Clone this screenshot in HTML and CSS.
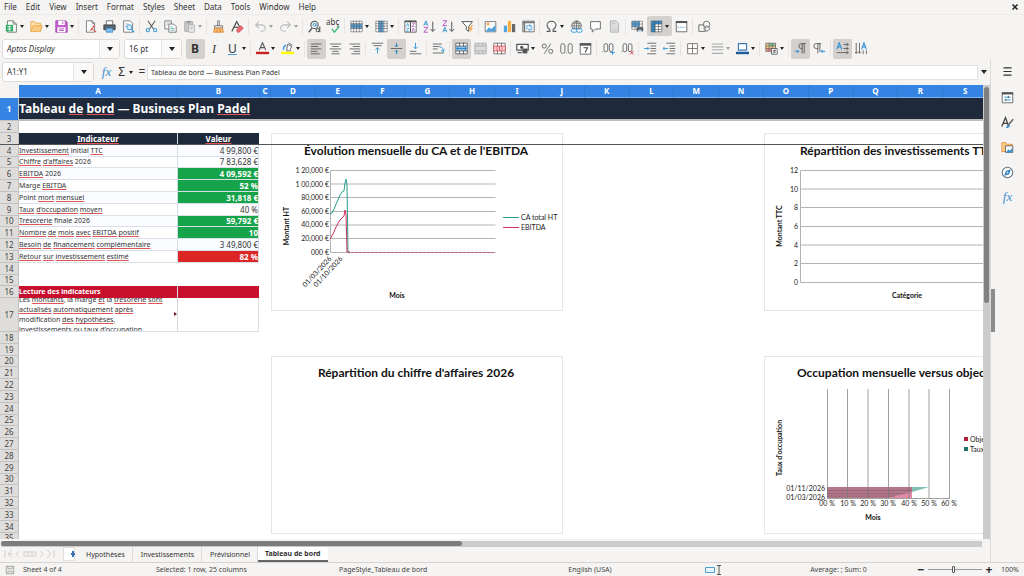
FILE: index.html
```html
<!DOCTYPE html>
<html lang="fr">
<head>
<meta charset="utf-8">
<title>Tableau de bord — Business Plan Padel</title>
<link rel="stylesheet" href="styles.css">
</head>
<body>
<nav class="menubar" aria-label="Menu">
  <button>File</button><button>Edit</button><button>View</button><button>Insert</button><button>Format</button><button>Styles</button><button>Sheet</button><button>Data</button><button>Tools</button><button>Window</button><button>Help</button>
  <button class="close" aria-label="Close"><svg viewBox="0 0 8 8"><path d="M1.5 1.5l5 5M6.500 1.500l-5 5" stroke="#222" stroke-width="1.500"/></svg></button>
</nav>

<div class="toolbar" role="toolbar" aria-label="Standard">
  <button class="tool split" aria-label="New"><svg viewBox="0 0 16 16"><path d="M3 1h7l4 4v10H3z" fill="#fff" stroke="#5a6a60"/><path d="M10 1v4h4" stroke="#5a6a60"/><path d="M1 6h9v8H1z" fill="#2fa866"/><path d="M3 8h5M3 10h5M3 12h5M5.500 7v6" stroke="#d8f5e4"/></svg></button>
  <button class="tool split" aria-label="Open"><svg viewBox="0 0 16 16"><path d="M1 14V2h5l1 2h6v3" fill="#fce0ae" stroke="#e8a33d"/><path d="M1 14L4 7h11l-2 7z" fill="#f9cc85" stroke="#e8a33d"/></svg></button>
  <button class="tool split" aria-label="Save"><svg viewBox="0 0 16 16"><path d="M1 1h12l2 2v12H1z" fill="#c45fd0" stroke="#9b3fa8"/><path d="M4 1h8v5H4zM3 9h10v6H3z" fill="#fff"/><path d="M5 11h6M5 13h6M9.500 2v3" stroke="#9b3fa8"/></svg></button>
  <span class="sep"></span>
  <button class="tool" aria-label="Export PDF"><svg viewBox="0 0 16 16"><path d="M3 1h7l3 3v11H3z" fill="#fff" stroke="#666"/><path d="M10 1v3h3" stroke="#666"/><path d="M13 6c-1 3-3 5-5 6 3-1 5 0 7 3M8 13c2-2 3-3 4-6" stroke="#e05555" stroke-width="1.300"/></svg></button>
  <button class="tool" aria-label="Print"><svg viewBox="0 0 16 16"><path d="M4 6V1h8v5" fill="#fff" stroke="#555"/><path d="M1 6h14v6H1z" fill="#55606a" stroke="#444"/><path d="M4 10h8v5H4z" fill="#7fc0f0" stroke="#3d85c0"/></svg></button>
  <button class="tool" aria-label="Print preview"><svg viewBox="0 0 16 16"><path d="M2 1h8l3 3v11H2z" fill="#fff" stroke="#666"/><path d="M4 5h4M4 8h2" stroke="#999"/><circle cx="9" cy="9" r="3.200" fill="#cfe9fb" stroke="#3e9bd8" stroke-width="1.200"/><path d="M11.500 11.500L15 15" stroke="#3e9bd8" stroke-width="1.600"/></svg></button>
  <span class="sep"></span>
  <button class="tool" aria-label="Cut"><svg viewBox="0 0 16 16"><path d="M3.500 1l7 10M12.500 1l-7 10" stroke="#555" stroke-width="1.300"/><circle cx="3.500" cy="12.500" r="2" stroke="#3e9bd8" stroke-width="1.300"/><circle cx="12.500" cy="12.500" r="2" stroke="#3e9bd8" stroke-width="1.300"/></svg></button>
  <button class="tool" aria-label="Copy"><svg viewBox="0 0 16 16"><path d="M1 1h8v10H1z" fill="#fff" stroke="#666"/><path d="M3 3.500h4M3 6h2" stroke="#999"/><path d="M6 5h6l3 3v7H6z" fill="#fff" stroke="#666"/><path d="M8 8.500h3M8 10.500h5M8 12.500h5" stroke="#5ab3a5"/></svg></button>
  <button class="tool split off" aria-label="Paste"><svg viewBox="0 0 16 16"><path d="M2 2h10v12H2z" fill="#c9c7c5" stroke="#aaa"/><path d="M5 1h4v3H5z" fill="#999"/><path d="M7 6h7v9H7z" fill="#eee" stroke="#aaa"/><path d="M9 9h3M9 11h3" stroke="#aaa"/></svg></button>
  <span class="sep"></span>
  <button class="tool" aria-label="Clone formatting"><svg viewBox="0 0 16 16"><path d="M7 1h2v6H7z" fill="#fff" stroke="#666"/><path d="M3 7h10v3H3z" fill="#eee" stroke="#666"/><path d="M3 10h10l1 5H2z" fill="#f4b46a" stroke="#d98c36"/><path d="M6 12v3M10 12v3" stroke="#d98c36"/></svg></button>
  <button class="tool" aria-label="Clear formatting"><svg viewBox="0 0 16 16"><path d="M1 14L7 2l5 9M4 9h5" stroke="#555" stroke-width="1.500"/><path d="M7 12l5-5 3 3-5 5H8z" fill="#ef6b73" stroke="#cf3f4a"/></svg></button>
  <span class="sep"></span>
  <button class="tool split off" aria-label="Undo"><svg viewBox="0 0 16 16"><path d="M6 2L2 6l4 4M2 6h7c4 0 5 3 5 4s-1 4-6 4" stroke="#bbb" stroke-width="1.300"/></svg></button>
  <button class="tool split off" aria-label="Redo"><svg viewBox="0 0 16 16"><path d="M10 2l4 4-4 4M14 6H7c-4 0-5 3-5 4s1 4 6 4" stroke="#bbb" stroke-width="1.300"/></svg></button>
  <span class="sep"></span>
  <button class="tool" aria-label="Find and replace"><svg viewBox="0 0 16 16"><circle cx="8" cy="6" r="4.500" stroke="#555" stroke-width="1.300"/><path d="M5 10l-4 5" stroke="#555" stroke-width="1.800"/><circle cx="8" cy="6" r="1.800" stroke="#3e9bd8" stroke-width="1.200"/><path d="M10 4v4" stroke="#3e9bd8"/><circle cx="12" cy="12.500" r="2" stroke="#444" stroke-width="1.200"/><path d="M14.500 8v7" stroke="#444" stroke-width="1.200"/></svg></button>
  <button class="tool" aria-label="Spelling"><span class="abc">abç</span><svg viewBox="0 0 16 16"><path d="M6 11l3 4 6-7" stroke="#3cb878" stroke-width="1.600"/></svg></button>
  <span class="sep"></span>
  <button class="tool split" aria-label="Row"><svg viewBox="0 0 16 16"><path d="M1 1h14v14H1z" fill="#fff"/><path d="M1 4.500h14v6H1z" fill="#4da3e0"/><path d="M1 1.500h14v13H1zM1 4.500h14M1 7.500h14M1 10.500h14M4.500 1v14M8 1v14M11.500 1v14" stroke="#666" stroke-width=".8"/></svg></button>
  <button class="tool split" aria-label="Column"><svg viewBox="0 0 16 16"><path d="M1 1h14v14H1z" fill="#fff"/><path d="M4.500 1h6v14h-6z" fill="#4da3e0"/><path d="M1 1.500h14v13H1zM1 4.500h14M1 7.500h14M1 10.500h14M4.500 1v14M7.500 1v14M11 1v14" stroke="#666" stroke-width=".8"/></svg></button>
  <span class="sep"></span>
  <button class="tool" aria-label="Sort"><svg viewBox="0 0 16 16"><path d="M1 1h14v14H1z" fill="#fff" stroke="#555"/><path d="M1 2h14M8 1v14" stroke="#555" stroke-width="1.400"/><path d="M3 8l1.500-4L6 8M3 10h3l-3 4h3" stroke="#3e9bd8"/><path d="M10 4h3l-3 4h3M10 14l1.500-4 1.500 4" stroke="#b153bd"/></svg></button>
  <button class="tool" aria-label="Sort ascending"><svg viewBox="0 0 16 16"><path d="M1 7l2.500-6L6 7M2 5h3" stroke="#3e9bd8" stroke-width="1.200"/><path d="M1 9h5l-5 6h5" stroke="#b153bd" stroke-width="1.200"/><path d="M12 2v12M9 11l3 3 3-3" stroke="#555" stroke-width="1.200"/></svg></button>
  <button class="tool" aria-label="Sort descending"><svg viewBox="0 0 16 16"><path d="M1 1h5L1 7h5" stroke="#b153bd" stroke-width="1.200"/><path d="M1 15l2.500-6L6 15M2 13h3" stroke="#3e9bd8" stroke-width="1.200"/><path d="M12 2v12M9 11l3 3 3-3" stroke="#555" stroke-width="1.200"/></svg></button>
  <button class="tool" aria-label="AutoFilter"><svg viewBox="0 0 16 16"><path d="M1 2h13L9.500 8v6l-3-2V8z" fill="#fff" stroke="#555" stroke-width="1.200"/><path d="M13 6l-4 6h3l-2 4 5-6h-3l3-4z" fill="#f5a742"/></svg></button>
  <span class="sep"></span>
  <button class="tool" aria-label="Image"><svg viewBox="0 0 16 16"><path d="M1.500 2h13v12.500h-13z" fill="#fff" stroke="#666"/><path d="M2 14l4-5 3 2 5-5v8z" fill="#4da3e0"/><circle cx="5" cy="5" r="1.800" fill="#f5a742"/></svg></button>
  <button class="tool" aria-label="Chart"><svg viewBox="0 0 16 16"><path d="M1 7h4v8H1z" fill="#4da3e0"/><path d="M6 1h4v14H6z" fill="#f4b042"/><path d="M11 5h4v10h-4z" fill="#666"/></svg></button>
  <button class="tool" aria-label="Pivot table"><svg viewBox="0 0 16 16"><path d="M1 1.500h14v13H1z" fill="#fff" stroke="#555"/><path d="M1 3h14M3 2v12" stroke="#777" stroke-width="2"/><path d="M6 12V7h5M9 5l2 2-2 2M12 7v5H8m2-2l-2 2 2 2" stroke="#3e9bd8"/></svg></button>
  <span class="sep"></span>
  <button class="tool split" aria-label="Special character"><svg viewBox="0 0 16 16"><path d="M2 14h4v-2C3 10 2.500 8 2.500 6.500 2.500 3.500 5 1.500 8 1.500s5.500 2 5.500 5c0 1.500-.5 3.500-3.500 5.500v2h4" stroke="#555" stroke-width="1.300"/></svg></button>
  <button class="tool" aria-label="Hyperlink"><svg viewBox="0 0 16 16"><circle cx="8" cy="7" r="5.800" stroke="#555"/><path d="M2 7h12M3 4h10M3 10h10M8 1v12M8 1c-4 4-4 8 0 12M8 1c4 4 4 8 0 12" stroke="#555" stroke-width=".8"/><rect x="1.500" y="11" width="7" height="4" rx="2" fill="#fff" stroke="#3e9bd8" stroke-width="1.200"/><rect x="8" y="11" width="7" height="4" rx="2" fill="#fff" stroke="#3e9bd8" stroke-width="1.200"/></svg></button>
  <button class="tool" aria-label="Comment"><svg viewBox="0 0 16 16"><path d="M2 2h12v9H8l-4 4v-4H2z" fill="#fff" stroke="#555"/></svg></button>
  <button class="tool off" aria-label="Headers and footers"><svg viewBox="0 0 16 16"><path d="M3 1h7l3 3v11H3z" fill="#ddd" stroke="#aaa"/><path d="M5 4h4M5 12h6" stroke="#bbb"/></svg></button>
  <span class="sep"></span>
  <button class="tool" aria-label="Print area"><svg viewBox="0 0 16 16"><path d="M1 1.500h13v10H1z" fill="#fff"/><path d="M1 1.500h10v7H1z" fill="#4da3e0"/><path d="M1 1.500h13v10H1zM1 5h13M1 8.500h13M5 1v10M9.500 1v10" stroke="#666" stroke-width=".8"/><path d="M7 9h8v5H7z" fill="#555"/><path d="M9 12h4v3H9z" fill="#bfe0f6"/></svg></button>
  <button class="tool split on" aria-label="Freeze rows and columns"><svg viewBox="0 0 16 16"><path d="M1.500 1h13v14h-13z" fill="#fff"/><path d="M1.500 1h13v4h-8v10h-5z" fill="#2b8fd6"/><path d="M1.500 1.500h13v13h-13zM2 5h12M2 8h12M2 11.500h12M6 1v14M10.500 1v14" stroke="#555" stroke-width=".8"/></svg></button>
  <button class="tool" aria-label="Split window"><svg viewBox="0 0 16 16"><path d="M1.500 2h13v12.500h-13z" fill="#fff" stroke="#555"/><path d="M1 2.500h14" stroke="#555" stroke-width="2.500"/><path d="M3 9h10" stroke="#4da3e0" stroke-dasharray="2 1"/></svg></button>
  <span class="sep"></span>
  <button class="tool" aria-label="Shapes"><svg viewBox="0 0 16 16"><path d="M1 6h8v8H1z" stroke="#555"/><circle cx="10.500" cy="5.500" r="4" fill="#fff" fill-opacity=".7" stroke="#555"/><path d="M11 7l4 3.500-4 3.500-4-3.500z" fill="#fff" fill-opacity=".5" stroke="#555"/></svg></button>
</div>

<div class="toolbar format" role="toolbar" aria-label="Formatting">
  <div class="combo font"><input class="italic" aria-label="Font name" value="Aptos Display"><button aria-label="Choose font"></button></div>
  <div class="combo size"><input aria-label="Font size" value="16 pt"><button aria-label="Choose size"></button></div>
  <button class="tool on glyph bold">B</button>
  <button class="tool glyph ital">I</button>
  <button class="tool split glyph under">U</button>
  <span class="sep"></span>
  <button class="tool split" aria-label="Font color"><svg viewBox="0 0 16 16"><path d="M4 10l4-9 4 9M5.500 7h5" stroke="#555" stroke-width="1.400"/><path d="M0 12h16v3H0z" fill="#c9211e"/></svg></button>
  <button class="tool split" aria-label="Highlighting"><svg viewBox="0 0 16 16"><path d="M8 3l5 2-2 6H7z" fill="#fff" stroke="#555"/><path d="M2 9c0-4 2-6 5-6L5 6c-1 1-1 2-1 4z" fill="#4da3e0"/><path d="M9 1l5 3" stroke="#555"/><path d="M0 12h16v3H0z" fill="#ffff00"/></svg></button>
  <span class="sep"></span>
  <button class="tool on" aria-label="Align left"><svg viewBox="0 0 16 16"><path d="M1 2.500h13M1 5.500h9M1 8.500h13M1 11.500h8M1 14.500h11" stroke="#555"/></svg></button>
  <button class="tool" aria-label="Align center"><svg viewBox="0 0 16 16"><path d="M1 2.500h14M4 5.500h8M1 8.500h14M4 11.500h8M3 14.500h10" stroke="#555"/></svg></button>
  <button class="tool" aria-label="Align right"><svg viewBox="0 0 16 16"><path d="M2 2.500h13M6 5.500h9M2 8.500h13M7 11.500h8M4 14.500h11" stroke="#555"/></svg></button>
  <span class="sep"></span>
  <button class="tool" aria-label="Align top"><svg viewBox="0 0 16 16"><path d="M1 1.500h14M3 4.500h10" stroke="#555"/><path d="M8 14V7M5.500 9.500L8 7l2.500 2.500" stroke="#3e9bd8" stroke-width="1.200"/></svg></button>
  <button class="tool on" aria-label="Center vertically"><svg viewBox="0 0 16 16"><path d="M1 8h14" stroke="#555"/><path d="M8 1v5M6 4l2 2 2-2M8 15v-5M6 12l2-2 2 2" stroke="#2d83bd" stroke-width="1.200"/></svg></button>
  <button class="tool" aria-label="Align bottom"><svg viewBox="0 0 16 16"><path d="M1 14.500h14M1 11.500h8" stroke="#555"/><path d="M8 1v7M5.500 6L8 8.500 10.500 6" stroke="#3e9bd8" stroke-width="1.200"/></svg></button>
  <span class="sep"></span>
  <button class="tool" aria-label="Wrap text"><svg viewBox="0 0 16 16"><path d="M1 2.500h11M1 5.500h8M1 8.500h6M1 13.500h14" stroke="#555"/><path d="M9 6c4 0 5 2 5 6M11 10l3 2 1-3" stroke="#3e9bd8" stroke-width="1.200"/></svg></button>
  <span class="sep"></span>
  <button class="tool on" aria-label="Merge and center"><svg viewBox="0 0 16 16"><path d="M1 1.500h14v13H1z" fill="#fff" stroke="#555"/><path d="M1 5h14v6H1z" fill="#8cc8ee"/><path d="M1 5h14M1 11h14M5.500 1v4M10.500 1v4M5.500 11v4M10.500 11v4" stroke="#555"/><path d="M2 8h12M4 6L2 8l2 2M12 6l2 2-2 2" stroke="#2276b5"/></svg></button>
  <button class="tool off" aria-label="Merge cells"><svg viewBox="0 0 16 16"><path d="M1 1.500h14v13H1zM1 5h14M1 11h14M5.500 1v4M10.500 1v4M5.500 11v4M10.500 11v4" fill="#ddd" stroke="#aaa"/></svg></button>
  <button class="tool" aria-label="Unmerge cells"><svg viewBox="0 0 16 16"><path d="M1 1.500h14v13H1z" fill="#fff" stroke="#666"/><path d="M1 5h14v6H1zM5 5v6M8 5v6M11 5v6" fill="#fbd5d8" stroke="#dc4a55"/><path d="M5.500 1v4M10.500 1v4M5.500 11v4M10.500 11v4" stroke="#666"/></svg></button>
  <span class="sep"></span>
  <button class="tool split" aria-label="Currency"><svg viewBox="0 0 16 16"><path d="M1 3h14v7H1z" fill="#fff" stroke="#555" stroke-width="1.500"/><circle cx="7" cy="6.500" r="2" fill="#555"/><path d="M8 8h6v6H8z" fill="#555"/><path d="M2 13h5" stroke="#555" stroke-width="1.500"/></svg></button>
  <button class="tool" aria-label="Percent"><svg viewBox="0 0 16 16"><circle cx="4" cy="5" r="2.500" stroke="#555"/><circle cx="12" cy="11.500" r="2.500" stroke="#555"/><path d="M12 2L4 14.500" stroke="#555"/></svg></button>
  <button class="tool" aria-label="Number format"><svg viewBox="0 0 16 16"><rect x="1" y="2" width="5" height="12" rx="2.500" stroke="#555"/><rect x="10" y="2" width="5" height="12" rx="2.500" stroke="#555"/><path d="M7.500 13.500h1" stroke="#555"/></svg></button>
  <button class="tool" aria-label="Date format"><svg viewBox="0 0 16 16"><path d="M1.500 2h13v13h-13z" fill="#fff" stroke="#555"/><path d="M1 3h14" stroke="#555" stroke-width="3"/><path d="M5.500 7h5l-3 6" stroke="#444" stroke-width="1.300"/></svg></button>
  <span class="sep"></span>
  <button class="tool" aria-label="Add decimal place"><svg viewBox="0 0 16 16"><path d="M.5 12h1" stroke="#555"/><rect x="2.500" y="2" width="4.500" height="10" rx="2.200" stroke="#555"/><rect x="9" y="2" width="4.500" height="10" rx="2.200" stroke="#555"/><path d="M10 13h6M13 10v6" stroke="#3e9bd8" stroke-width="1.200"/></svg></button>
  <button class="tool" aria-label="Delete decimal place"><svg viewBox="0 0 16 16"><path d="M.5 12h1" stroke="#555"/><rect x="2.500" y="2" width="4.500" height="10" rx="2.200" stroke="#555"/><rect x="9" y="2" width="4.500" height="10" rx="2.200" stroke="#555"/><path d="M11 11l4.500 4.500M15.500 11L11 15.500" stroke="#dc4a55" stroke-width="1.200"/></svg></button>
  <span class="sep"></span>
  <button class="tool" aria-label="Increase indent"><svg viewBox="0 0 16 16"><path d="M4 1.500h11M8 5h7M8 8h7M8 11h7M4 14.500h11" stroke="#555"/><path d="M0 8h6M4 6l2 2-2 2" stroke="#3e9bd8" stroke-width="1.200"/></svg></button>
  <button class="tool" aria-label="Decrease indent"><svg viewBox="0 0 16 16"><path d="M4 1.500h11M8 5h7M8 8h7M8 11h7M4 14.500h11" stroke="#555"/><path d="M0 8h6M2 6L0 8l2 2" stroke="#3e9bd8" stroke-width="1.200"/></svg></button>
  <span class="sep"></span>
  <button class="tool split" aria-label="Borders"><svg viewBox="0 0 16 16"><path d="M2 2h12v12.500H2zM8 2v12M2 8h12" fill="#fff" stroke="#6b665c"/></svg></button>
  <button class="tool split off" aria-label="Border style"><svg viewBox="0 0 16 16"><path d="M1 2.500h14M1 6h14M1 9.500h14M1 14h14" stroke="#aaa" stroke-width="1.300"/></svg></button>
  <button class="tool split" aria-label="Border color"><svg viewBox="0 0 16 16"><path d="M3 2h10v8H3z" fill="#fff" stroke="#3978b5" stroke-width="1.400"/><path d="M0 12h16v3H0z" fill="#1c5b9e"/></svg></button>
  <span class="sep"></span>
  <button class="tool split" aria-label="Conditional formatting"><svg viewBox="0 0 16 16"><path d="M1 1.500h12v10H1z" fill="#f3c98b" stroke="#666"/><path d="M5 2h7v3H5z" fill="#6dc48a"/><path d="M2 8h7v3H2z" fill="#ec7c7c"/><path d="M1 5h12M1 8h12M5 1v10M9 1v10" stroke="#666" stroke-width=".8"/><path d="M8 8h7v7H8z" fill="#fff" stroke="#555"/><path d="M9.500 10.500h4M9.500 12.500h4M12.500 9l-2 5" stroke="#444" stroke-width=".8"/></svg></button>
  <span class="sep"></span>
  <button class="tool on" aria-label="Left to right"><svg viewBox="0 0 16 16"><path d="M14.500 2H9a3 3 0 0 0 0 6h1V2M10 8v6M12.500 2v12" stroke="#555" stroke-width="1.100"/><path d="M1 11.500h5M4 9.500l2 2-2 2" stroke="#2b8fd6" stroke-width="1.200"/></svg></button>
  <button class="tool" aria-label="Right to left"><svg viewBox="0 0 16 16"><path d="M10 2H4a3 3 0 0 0 0 6h2V2M6 8v6M8.500 2v10" stroke="#555" stroke-width="1.100"/><path d="M10 11.500h5M12 9.500l-2 2 2 2" stroke="#2b8fd6" stroke-width="1.200"/></svg></button>
  <span class="sep"></span>
  <button class="tool on" aria-label="Text left to right"><svg viewBox="0 0 16 16"><path d="M1 9l3-8 3 8M2 6h4" stroke="#2b8fd6" stroke-width="1.300"/><path d="M9 3h6M9 8h6M1 13h14M13 1l2 2-2 2M13 6l2 2-2 2M13 11l2 2-2 2" stroke="#555"/></svg></button>
  <button class="tool" aria-label="Text top to bottom"><svg viewBox="0 0 16 16"><path d="M8 9l3-8 3 8M9 6h4" stroke="#2b8fd6" stroke-width="1.300"/><path d="M1.500 1v13M5.500 1v13M10 10v5M14 10v5M0 12l1.500 2L3 12M4 12l1.500 2L7 12" stroke="#555"/></svg></button>
</div>

<div class="workspace">
  <main class="editor">
    <div class="formula">
      <div class="combo name"><input aria-label="Name box" value="A1:Y1"><button aria-label="Choose range"></button></div>
      <button class="fx" aria-label="Function wizard"><i>fx</i></button>
      <button class="sum" aria-label="Select function">Σ</button>
      <button class="eq" aria-label="Formula">=</button>
      <input class="line" aria-label="Input line" value="Tableau de bord — Business Plan Padel">
      <button class="expand" aria-label="Expand formula bar"></button>
    </div>

    <div class="sheetwrap">
      <div class="sheet">
        <table class="grid">
          <colgroup><col class="ch"><col class="ca"><col class="cb"><col class="cc"><col span="16"></colgroup>
          <thead><tr><th></th><th>A</th><th>B</th><th>C</th><th>D</th><th>E</th><th>F</th><th>G</th><th>H</th><th>I</th><th>J</th><th>K</th><th>L</th><th>M</th><th>N</th><th>O</th><th>P</th><th>Q</th><th>R</th><th>S</th></tr></thead>
          <tbody>
            <tr class="title"><th>1</th><td colspan="19">Tableau <u>de</u> <u>bord</u> — Business Plan <u>Padel</u></td></tr>
            <tr><th>2</th></tr>
            <tr class="heads"><th>3</th><td><u>Indicateur</u></td><td><u>Valeur</u></td></tr>
            <tr class="data"><th>4</th><td><u>Investissement</u> initial <u>TTC</u></td><td>4 99,800 €</td></tr>
            <tr class="data"><th>5</th><td><u>Chiffre</u> <u>d'affaires</u> 2026</td><td>7 83,628 €</td></tr>
            <tr class="data"><th>6</th><td><u>EBITDA</u> 2026</td><td class="good">4 09,592 €</td></tr>
            <tr class="data"><th>7</th><td>Marge <u>EBITDA</u></td><td class="good">52 %</td></tr>
            <tr class="data"><th>8</th><td>Point <u>mort</u> <u>mensuel</u></td><td class="good">31,818 €</td></tr>
            <tr class="data"><th>9</th><td><u>Taux</u> <u>d'occupation</u> <u>moyen</u></td><td>40 %</td></tr>
            <tr class="data"><th>10</th><td><u>Trésorerie</u> finale 2026</td><td class="good">59,792 €</td></tr>
            <tr class="data"><th>11</th><td><u>Nombre</u> <u>de</u> <u>mois</u> <u>avec</u> <u>EBITDA</u> <u>positif</u></td><td class="good">10</td></tr>
            <tr class="data"><th>12</th><td><u>Besoin</u> <u>de</u> <u>financement</u> <u>complémentaire</u></td><td>3 49,800 €</td></tr>
            <tr class="data"><th>13</th><td><u>Retour</u> <u>sur</u> <u>investissement</u> <u>estimé</u></td><td class="bad">82 %</td></tr>
            <tr><th>14</th></tr>
            <tr><th>15</th></tr>
            <tr class="notehead"><th>16</th><td>Lecture des indicateurs</td><td></td></tr>
            <tr class="note"><th>17</th><td><div class="clip"><p>Les <u>montants</u>, la marge <u>et</u> la <u>trésorerie</u> <u>sont</u><br><u>actualisés</u> <u>automatiquement</u> <u>après</u><br>modification <u>des</u> <u>hypothèses</u>,<br><u>investissements</u> <u>ou</u> <u>taux</u> <u>d'occupation</u>.</p></div></td><td></td></tr>
            <tr><th>18</th></tr><tr><th>19</th></tr><tr><th>20</th></tr><tr><th>21</th></tr><tr><th>22</th></tr><tr><th>23</th></tr><tr><th>24</th></tr><tr><th>25</th></tr><tr><th>26</th></tr><tr><th>27</th></tr><tr><th>28</th></tr><tr><th>29</th></tr><tr><th>30</th></tr><tr><th>31</th></tr><tr><th>32</th></tr><tr><th>33</th></tr><tr><th>34</th></tr><tr><th>35</th></tr>
          </tbody>
        </table>
        <div class="freeze"></div>

        <svg class="chart evolution" viewBox="0 0 290 176" role="img" aria-label="Évolution mensuelle du CA et de l'EBITDA">
          <text class="ct mid" x="144" y="21">Évolution mensuelle du CA et de l'EBITDA</text>
          <path class="gl" d="M58.500 36.500h165M58.500 50h165M58.500 63.500h165M58.500 77.500h165M58.500 91h165M58.500 104.500h165M58.500 118.500h165M58.500 36.500v82"/>
          <g class="ax end"><text x="57" y="39">1 20,000 €</text><text x="57" y="53">1 00,000 €</text><text x="57" y="66">80,000 €</text><text x="57" y="80">60,000 €</text><text x="57" y="93">40,000 €</text><text x="57" y="107">20,000 €</text><text x="57" y="121">000 €</text></g>
          <g class="ax end"><text transform="translate(60 125) rotate(-47)">01/03/2026</text><text transform="translate(71 125) rotate(-47)">01/10/2026</text></g>
          <path d="M58 80l2-1 2-4 3-7 3-7 3-4h1l1-8 1-4 1 6 1 67 2 1" stroke="#2a9d8f"/>
          <path d="M58 105l3-5 3-7 4-7 3-3 1-1 1-6 1 4 1 38h3" stroke="#d03058"/>
          <path d="M79 118.500h144" stroke="#c06070" stroke-dasharray="3 1"/>
          <path d="M231 83.500h16" stroke="#2a9d8f"/><path d="M231 93.500h16" stroke="#d03058"/>
          <g class="ax"><text x="249" y="86">CA total HT</text><text x="249" y="96">EBITDA</text></g>
          <text class="at" transform="translate(17 92) rotate(-90)">Montant HT</text><text class="at" x="125" y="164">Mois</text>
        </svg>
        <svg class="chart invest" viewBox="0 0 290 176" role="img" aria-label="Répartition des investissements TTC">
          <text class="ct" x="35" y="21">Répartition des investissements TTC</text>
          <path class="gl" d="M35.500 36.500h250M35.500 55h250M35.500 73.500h250M35.500 92.500h250M35.500 111h250M35.500 129.500h250M35.500 148.500h250M35.500 36.500v112"/>
          <g class="ax end"><text x="33" y="39">12</text><text x="33" y="58">10</text><text x="33" y="76">8</text><text x="33" y="95">6</text><text x="33" y="114">4</text><text x="33" y="132">2</text><text x="33" y="151">0</text></g>
          <text class="at" transform="translate(17 92) rotate(-90)">Montant TTC</text><text class="at" x="142" y="164">Catégorie</text>
        </svg>
        <svg class="chart revenue" viewBox="0 0 290 176" role="img" aria-label="Répartition du chiffre d'affaires 2026">
          <text class="ct mid" x="144" y="20">Répartition du chiffre d'affaires 2026</text>
        </svg>
        <svg class="chart occupancy" viewBox="0 0 290 176" role="img" aria-label="Occupation mensuelle versus objectif">
          <text class="ct" x="32" y="20">Occupation mensuelle versus objectif</text>
          <path d="M62 130h85v11H62z" fill="#e08ca4"/>
          <path d="M62 130h85v5l-24 6H62z" fill="#b0788a"/>
          <path d="M62 133.500h85M62 136.500h78M62 139h68" stroke="#8d5060" stroke-opacity=".5"/>
          <path d="M147 130h17l-17 5z" fill="#7fbfb5"/>
          <path class="gv" d="M62.500 32v109M82.500 32v109M103 32v109M123.500 32v109M144 32v109M164 32v109M184.500 32v109M62 141.500h123"/>
          <g class="ax end"><text x="60" y="134">01/11/2026</text><text x="60" y="143">01/03/2026</text></g>
          <g class="ax mid"><text x="62" y="149">00 %</text><text x="83" y="149">10 %</text><text x="103" y="149">20 %</text><text x="123" y="149">30 %</text><text x="144" y="149">40 %</text><text x="164" y="149">50 %</text><text x="184" y="149">60 %</text></g>
          <path d="M199 80h4v4h-4z" fill="#b0203c"/><path d="M199 90h4v4h-4z" fill="#1f7368"/>
          <g class="ax"><text x="205" y="85">Objectif</text><text x="205" y="95">Taux d'occupation</text></g>
          <text class="at" transform="translate(17 91) rotate(-90)">Taux d'occupation</text><text class="at" x="108" y="163">Mois</text>
        </svg>
      </div>
      <div class="vscroll"><span></span></div>
    </div>
    <div class="hscroll"><span></span></div>
    <div class="tabs">
      <svg class="nav" viewBox="0 0 52 12"><path d="M1 2v8M8 2L4 6l4 4M9 6H5M15 3l-3 3 3 3M20 4h12v4H20zM24 3v6M28 3v6M36 3l3 3-3 3M43 2l4 4-4 4M50 2v8" stroke="#d4d2d0"/></svg>
      <button class="addsheet" aria-label="Add sheet"><svg viewBox="0 0 6 6"><path d="M3 0v6M1 3h4" stroke="#3b6fb5" stroke-width="2"/></svg></button>
      <button>Hypothèses</button><button>Investissements</button><button>Prévisionnel</button><button class="current">Tableau de bord</button>
    </div>
  </main>
  <aside class="sidebar">
    <button aria-label="Sidebar settings"><svg viewBox="0 0 16 16"><path d="M3 3.500h10M3 8h10M3 12.500h10" stroke="#333" stroke-width="1.500"/></svg></button>
    <button aria-label="Properties"><svg viewBox="0 0 16 16"><path d="M1.500 2h13v12.500h-13z" fill="#fff" stroke="#555"/><path d="M1 3h14" stroke="#555" stroke-width="2.500"/><path d="M4 7.500h8M4 11h8" stroke="#3e9bd8" stroke-width="1.200"/><path d="M9 6v3M6 9.500v3" stroke="#555"/></svg></button>
    <button aria-label="Styles"><svg viewBox="0 0 16 16"><path d="M1 13L5.500 2l4 11M3 9h5" stroke="#444" stroke-width="1.600"/><path d="M15 4l-6 7" stroke="#666" stroke-width="2"/><path d="M6 15c1-4 3-5 5-4 0 3-2 4-5 4z" fill="#3e8fd0"/></svg></button>
    <button aria-label="Gallery"><svg viewBox="0 0 16 16"><path d="M1 13V2h5l1 2h7v9z" fill="#f9cc85" stroke="#e8913d"/><path d="M5.500 6h9v8h-9z" fill="#fff" stroke="#555"/><path d="M6 14l3-4 2 2 3-4v6z" fill="#3e8fd0"/></svg></button>
    <button aria-label="Navigator"><svg viewBox="0 0 16 16"><circle cx="8" cy="8" r="6.500" fill="#fff" stroke="#607080" stroke-width="1.300"/><path d="M12 4l-2 6-6 2 2-6z" fill="#2f83c8"/><circle cx="8" cy="8" r="1" fill="#fff"/></svg></button>
    <button class="fx" aria-label="Functions"><i>fx</i></button>
    <span class="grip"></span>
  </aside>
</div>

<footer class="status">
  <span><svg viewBox="0 0 12 12"><path d="M1.500 1.500h9v9h-9zM3.500 1.500v3h5v-3M3.500 10.500v-3h5v3" stroke="#999"/></svg></span>
  <span>Sheet 4 of 4</span>
  <span>Selected: 1 row, 25 columns</span>
  <span>PageStyle_Tableau de bord</span>
  <span class="mid">English (USA)</span>
  <span class="mid"><svg class="sel" viewBox="0 0 16 10"><path d="M.5 2.500h9v5h-9z" fill="#e8f4fc" stroke="#4a9fd8"/><path d="M12 .5h4M12 9.500h4M14 .5v9" stroke="#555"/></svg></span>
  <span class="mid">Average: ; Sum: 0</span>
  <span class="zoom"><button aria-label="Zoom out">−</button><input type="range" min="0" max="100" value="48" aria-label="Zoom"><button aria-label="Zoom in">+</button></span>
  <span>100%</span>
</footer>
</body>
</html>
```

FILE: styles.css
```css
* { box-sizing: border-box; }
body {
  margin: 0;
  height: 100vh;
  display: flex;
  flex-direction: column;
  overflow: hidden;
  background: #f5f4f2;
  color: #333;
  font: 8px/10px "Noto Sans", "Open Sans", sans-serif;
}
button, input { font: inherit; color: inherit; margin: 0; padding: 0; border: 0; background: none; }
svg { fill: none; display: block; }

.menubar { display: flex; gap: 9px; height: 14px; padding: 0 5px 0 4px; align-items: center; flex: none; }
.menubar .close { margin-left: auto; }
.close svg { width: 8px; height: 8px; }

.toolbar { display: flex; align-items: center; height: 23px; padding: 0 2px; flex: none; border-top: 1px solid #ecebe9; }
.toolbar.format { height: 23px; border-top: 0; }
.tool { position: relative; display: flex; align-items: center; width: 19px; height: 20px; padding: 0 3px; border-radius: 2px; flex: none; }
.tool svg { width: 13px; height: 13px; flex: none; }
.tool.split { width: 25px; }
.tool.split::after { content: ""; margin-left: auto; border: 2px solid transparent; border-top: 3px solid #222; border-bottom: 0; flex: none; }
.tool.off::after { opacity: .4; }
.tool.on { background: #d3d0cd; }
.tool .abc { position: absolute; left: 2px; top: 1px; }
.sep { flex: none; width: 1px; height: 16px; margin: 0 2px 0 1px; background: #e6e4e2; }
.glyph { font-size: 12px; line-height: 16px; padding-left: 5px; }
.glyph.bold { font-weight: 700; }
.glyph.ital { font-family: "Liberation Serif", serif; font-style: italic; padding-left: 7px; }
.glyph.under { text-decoration: underline; text-decoration-color: #4a9fd8; padding-left: 4px; }

.combo { display: flex; flex: none; height: 20px; background: #fff; border: 1px solid #dddbd9; border-radius: 3px; margin-right: 4px; }
.combo input { flex: 1; min-width: 0; padding-left: 4px; }
.combo button, .expand { display: flex; align-items: center; justify-content: center; width: 20px; background: #faf9f8; border-left: 1px solid #e5e3e1; }
.combo button::after, .expand::after { content: ""; border: 3px solid transparent; border-top: 4px solid #222; border-bottom: 0; }
.combo.font { width: 118px; }
.combo.size { width: 58px; }
.combo .italic { font-style: italic; }

.workspace { flex: 1; min-height: 0; display: flex; }
.editor { flex: 1; min-width: 0; display: flex; flex-direction: column; }
.formula { display: flex; align-items: center; height: 25px; padding: 0 0 1px 2px; flex: none; }
.combo.name { width: 92px; margin-right: 6px; }
.fx { color: #3e8fd0; font-family: "Liberation Serif", serif; font-size: 13px; width: 13px; }
.sum { display: flex; align-items: center; justify-content: flex-end; gap: 4px; width: 24px; padding-right: 4px; font-size: 12px; }
.sum::after { content: ""; border: 2px solid transparent; border-top: 3px solid #222; border-bottom: 0; }
.eq { width: 10px; font-size: 12px; }
.line { flex: 1; min-width: 0; height: 15px; background: #fff; border: 1px solid #e3e1df; padding-left: 3px; font-size: 7px; }
.expand { width: 12px; height: 14px; background: none; border: 0; }

.sheetwrap { flex: 1; min-height: 0; display: flex; }
.sheet { position: relative; flex: 1; min-width: 0; overflow: hidden; background: #fff; }
.grid { table-layout: fixed; width: calc(100% + 4px); border-collapse: separate; border-spacing: 0; }
.ch { width: 19px; }
.ca { width: 158px; }
.cb { width: 82px; }
.cc { width: 11px; }
.grid th, .grid td { padding: 0; }
thead th { height: 13px; background: #3584e4; color: #fff; border-bottom: 1px solid #7fb2ee; }
thead th + th + th { border-left: 1px solid #3179d2; }
thead th:first-child { background: #f5f4f2; border: 0; }
tbody tr { height: 12px; }
tbody tr:nth-child(5n) { height: 11px; }
tbody th { background: #dfdddb; color: #444; font-weight: 400; border-right: 1px solid #c4c2c0; border-bottom: 1px solid #c4c2c0; }
tbody .title { height: 23px; }
.title th { background: #3584e4; color: #fff; font-weight: 700; }
.title td { background: #1e293b; color: #fff; font-size: 12px; line-height: 16px; font-weight: 700; border-bottom: 2px solid #bcbcbc; }
.grid u { text-decoration: underline 1px #e25555; text-underline-offset: 1px; text-decoration-skip-ink: none; }
.heads td { background: #1e293b; color: #fff; font-weight: 700; text-align: center; }
.heads td + td, .data td + td, .notehead td + td, .note td + td { border-left: 1px solid #d3dbe3; }
.data td { border-bottom: 1px solid #d9e0e7; white-space: nowrap; font-size: 7px; }
.data:nth-child(even) td { background: #fafcff; }
.data td + td { text-align: right; border-right: 1px solid #d9e0e7; font-size: 8px; }
.grid .data .good { background: #16a34a; color: #fff; font-weight: 700; }
.grid .data .bad { background: #dc2626; color: #fff; font-weight: 700; }
.notehead td { background: #c8102e; color: #fff; font-weight: 700; font-size: 7px; }
.note td { border-bottom: 1px solid #d9e0e7; font-size: 7px; }
.note td + td { border-right: 1px solid #d9e0e7; }
.clip { display: flex; align-items: center; height: 33px; overflow: hidden; position: relative; white-space: nowrap; }
.clip p { margin: 0; }
.clip::after { content: ""; position: absolute; right: 0; top: 14px; border: 2px solid transparent; border-left: 3px solid #7a1020; border-right: 0; }
.freeze { position: absolute; left: 0; right: 0; top: 59px; height: 1px; background: #555; z-index: 1; }

.chart { position: absolute; box-sizing: content-box; width: 290px; height: 176px; background: #fff; border: 1px solid #e6e6e6; font-family: Lato, sans-serif; fill: none; }
.evolution { left: 271px; top: 48px; }
.invest { left: 764px; top: 48px; }
.revenue { left: 271px; top: 271px; }
.occupancy { left: 764px; top: 271px; }
.ct { font-size: 12px; font-weight: 700; fill: #111; }
.ax { font-size: 7px; fill: #222; }
.end { text-anchor: end; }
.mid { text-anchor: middle; }
.at { font-size: 7px; font-weight: 700; fill: #111; text-anchor: middle; }
.gl { stroke: #b3b3b3; }
.gv { stroke: #777; stroke-opacity: .7; }

.vscroll { width: 7px; background: #cbcbcb; padding: 2px 1px; flex: none; }
.vscroll span { display: block; height: 48%; border-radius: 3px; background: #808080; }
.hscroll { height: 8px; margin: 0 8px 0 1px; background: #cbcbcb; border: solid #f5f4f2; border-width: 2px 0 0; flex: none; }
.hscroll span { display: block; width: 47%; height: 5px; border-radius: 3px; background: #7c7c7c; }
.tabs { display: flex; align-items: stretch; height: 15px; padding-left: 4px; flex: none; font-size: 7px; }
.tabs .nav { width: 52px; height: 14px; }
.tabs button { padding: 0 7px 0 8px; border-right: 1px solid #dcdad8; }
.tabs .addsheet { width: 12px; margin: 0 3px 1px 7px; padding: 0; background: #fff; border: 1px solid #e3e1df; }
.addsheet svg { width: 6px; height: 6px; margin-left: 6px; }
.tabs .current { background: #fff; font-weight: 700; border: 0; border-bottom: 2px solid #666; padding: 0 7px; }

.sidebar { position: relative; width: 34px; flex: none; display: flex; flex-direction: column; align-items: center; gap: 5px; padding-top: 1px; border-left: 1px solid #dcdad8; }
.sidebar button { display: flex; align-items: center; justify-content: center; width: 20px; height: 20px; }
.sidebar button:first-child { height: 21px; }
.sidebar svg { width: 13px; height: 13px; }
.grip { position: absolute; left: 0; top: 229px; width: 4px; height: 43px; background: #8c8c8c; }

.status { display: grid; grid-template-columns: 23fr 133fr 183fr 191fr 120fr 125fr 127fr 99fr 23fr; align-items: center; height: 14px; flex: none; border-top: 1px solid #d5d3d1; white-space: nowrap; color: #444; font-size: 7px; }
.status .mid { display: flex; justify-content: center; }
.status svg { width: 10px; height: 10px; margin-left: 5px; }
.status .sel { width: 16px; margin: 0; }
.zoom { display: flex; align-items: center; gap: 3px; padding-left: 15px; padding-right: 8px; font-weight: 700; min-width: 0; }
.zoom button { width: 8px; font-size: 12px; line-height: 10px; color: #222; }
.zoom input { appearance: none; flex: 1; width: 0; min-width: 0; height: 8px; background: linear-gradient(#999, #999) center / 100% 1px no-repeat; }
.zoom input::-webkit-slider-thumb { appearance: none; width: 3px; height: 7px; border: 1px solid #555; border-radius: 1px; background: #fff; }
```
